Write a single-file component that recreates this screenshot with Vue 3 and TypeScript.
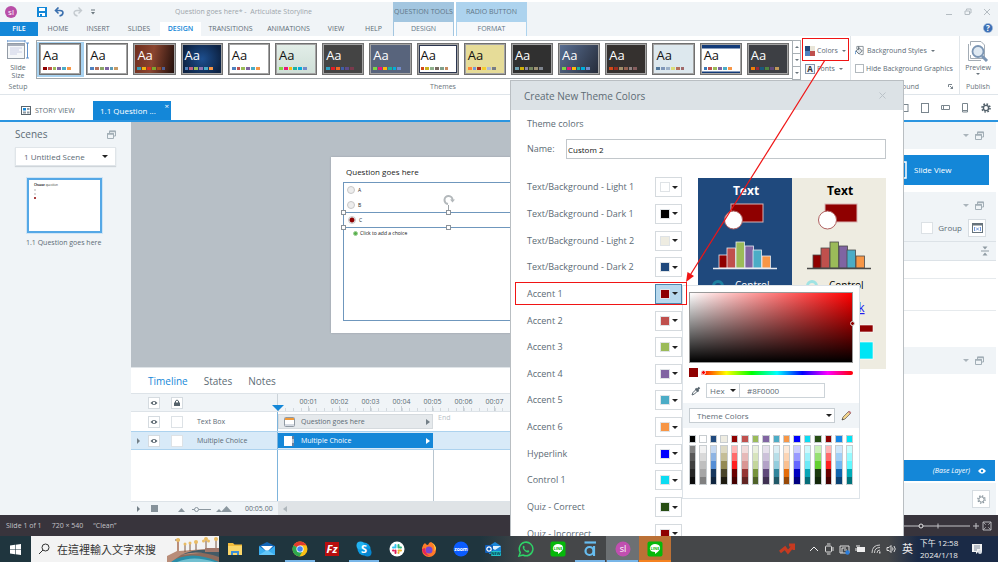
<script setup lang="ts">
import { ref } from 'vue'

interface Theme {
  name: string
  look: string
  palette: string[]
}

const ribbonTabs = [
  { label: 'FILE', kind: 'file' },
  { label: 'HOME', kind: '' },
  { label: 'INSERT', kind: '' },
  { label: 'SLIDES', kind: '' },
  { label: 'DESIGN', kind: 'active' },
  { label: 'TRANSITIONS', kind: '' },
  { label: 'ANIMATIONS', kind: '' },
  { label: 'VIEW', kind: '' },
  { label: 'HELP', kind: '' },
]

const office = ['#4f81bd', '#c0504d', '#9bbb59', '#8064a2', '#4bacc6', '#f79646']
const themes: Theme[] = [
  { name: 'custom', look: 'selected', palette: ['#8f0000', '#c0504d', '#9bbb59', '#8064a2', '#4bacc6', '#f79646'] },
  { name: 'office', look: '', palette: ['#4f81bd', '#b5705d', '#8aa568', '#8064a2', '#5b9cb6', '#c79a66'] },
  { name: 'copper', look: 'copper', palette: ['#3a9ab2', '#f0b310', '#d8321e', '#7fa62e', '#a34b1c', '#4f5f94'] },
  { name: 'navy', look: 'navy', palette: ['#4f81bd', '#c0607d', '#9bbb59', '#8f74b2', '#4bacc6', '#f79646'] },
  { name: 'clean', look: '', palette: office },
  { name: 'mint', look: 'mint', palette: ['#7ed348', '#ea157a', '#feb80a', '#1ab39f', '#00addc', '#738ac8'] },
  { name: 'charcoal', look: 'charcoal', palette: ['#2f9fc0', '#e01f26', '#f26522', '#3f5fa8', '#5b4a8a', '#7a3a4c'] },
  { name: 'slate', look: 'slate', palette: ['#7ed348', '#ea157a', '#feb80a', '#1ab39f', '#00addc', '#738ac8'] },
  { name: 'frame', look: 'framed', palette: ['#d34817', '#c9b01d', '#8fb08c', '#7a6a60', '#7f9f8b', '#c78a60'] },
  { name: 'sand', look: 'sand', palette: ['#fe8637', '#7598d9', '#b32c16', '#f5cd2d', '#aebad5', '#777c84'] },
  { name: 'board', look: 'board', palette: ['#6ea0b0', '#ccaf0a', '#8d89a4', '#748560', '#9e9273', '#7e848d'] },
  { name: 'dusk', look: 'dusk', palette: ['#7ed348', '#ea157a', '#feb80a', '#1ab39f', '#00addc', '#738ac8'] },
  { name: 'coffee', look: 'coffee', palette: ['#d34817', '#9b2d1f', '#a28e6a', '#956251', '#918485', '#855d5d'] },
  { name: 'ice', look: 'ice', palette: ['#53789b', '#8097b8', '#9cb0c8', '#d9dc7a', '#b5705d', '#a06a6a'] },
  { name: 'bands', look: 'bands', palette: ['#3b78b8', '#c0504d', '#9bbb59', '#8064a2', '#4bacc6', '#f79646'] },
  { name: 'graphite', look: 'graphite', palette: ['#f07f09', '#9f2936', '#1b587c', '#4e8542', '#604878', '#c19859'] },
]

const colorRows = [
  { label: 'Text/Background - Light 1', color: '#ffffff' },
  { label: 'Text/Background - Dark 1', color: '#000000' },
  { label: 'Text/Background - Light 2', color: '#eeece1' },
  { label: 'Text/Background - Dark 2', color: '#1f497d' },
  { label: 'Accent 1', color: '#8f0000' },
  { label: 'Accent 2', color: '#c0504d' },
  { label: 'Accent 3', color: '#9bbb59' },
  { label: 'Accent 4', color: '#8064a2' },
  { label: 'Accent 5', color: '#4bacc6' },
  { label: 'Accent 6', color: '#f79646' },
  { label: 'Hyperlink', color: '#0000ff' },
  { label: 'Control 1', color: '#0cdcf2' },
  { label: 'Quiz - Correct', color: '#274e13' },
  { label: 'Quiz - Incorrect', color: '#8f0000' },
]

const swatches = [
  ['#000000', '#808080', '#595959', '#404040', '#262626', '#0d0d0d'],
  ['#ffffff', '#f2f2f2', '#d9d9d9', '#bfbfbf', '#a6a6a6', '#808080'],
  ['#1f497d', '#c6d9f1', '#8eb4e3', '#558ed5', '#17375e', '#10253f'],
  ['#eeece1', '#ddd9c3', '#c4bd97', '#948a54', '#4a452a', '#1e1c11'],
  ['#8f0000', '#ffb5b5', '#ff6b6b', '#ff2020', '#6b0000', '#470000'],
  ['#c0504d', '#f2dcdb', '#e6b9b8', '#d99694', '#953735', '#632523'],
  ['#9bbb59', '#ebf1de', '#d7e4bd', '#c3d69b', '#77933c', '#4f6228'],
  ['#8064a2', '#e6e0ec', '#ccc1da', '#b3a2c7', '#604a7b', '#403152'],
  ['#4bacc6', '#dbeef4', '#b7dee8', '#93cddd', '#31859c', '#215968'],
  ['#f79646', '#fdeada', '#fcd5b5', '#fac090', '#e46c0a', '#984807'],
  ['#0000ff', '#ccccff', '#9999ff', '#6666ff', '#0000bf', '#000080'],
  ['#0cdcf2', '#cef8fc', '#9df1fa', '#6ceaf7', '#09a5b5', '#066e79'],
  ['#274e13', '#cbf0b8', '#97e072', '#64d030', '#1d3a0e', '#132709'],
  ['#8f0000', '#ffb5b5', '#ff6b6b', '#ff2020', '#6b0000', '#470000'],
  ['#1487e8', '#d0e7fa', '#a1cff6', '#72b7f1', '#0f65ae', '#0a4374'],
  ['#00e5f5', '#caffff', '#96fbff', '#61f9ff', '#00acb8', '#00737b'],
]

const bars = [
  { x: 21, h: 13, c: '#8f0000' },
  { x: 29, h: 20, c: '#c0504d' },
  { x: 38, h: 26, c: '#9bbb59' },
  { x: 47, h: 22, c: '#8064a2' },
  { x: 55, h: 18, c: '#4bacc6' },
  { x: 64, h: 12, c: '#f79646' },
]
const previews = [
  { id: 'dark', bg: '#1f497d', fg: '#ffffff', edge: '#e8ecf2', ring: '#1d7f9f' },
  { id: 'light', bg: '#eeece1', fg: '#000000', edge: '#4a4a4a', ring: '#9fe3e4' },
]

const seconds = Array.from({ length: 7 }, (_, i) => '00:' + String(i + 1).padStart(2, '0'))
const apps = [
  { id: 'files', state: '' }, { id: 'mail', state: '' }, { id: 'chrome', state: 'open' },
  { id: 'filezilla', state: '' }, { id: 'skype', state: 'open' }, { id: 'slack', state: '' },
  { id: 'firefox', state: '' }, { id: 'zoom', state: '' }, { id: 'outlook', state: '' },
  { id: 'whatsapp', state: '' }, { id: 'line', state: '' }, { id: 'articulate', state: 'open' },
  { id: 'storyline', state: 'open current' }, { id: 'line', state: 'alert' },
]

const answer = ref('C')
const themeName = ref('Custom 2')
const hex = ref('#8F0000')
const hideGraphics = ref(false)
const group = ref(false)
</script>

<template>
  <div class="desktop">
    <header class="top">
      <div class="top-left">
        <div class="quick">
          <svg class="badge-sl" viewBox="0 0 12 12"><circle cx="6" cy="6" r="6" fill="#b94fa8" /><text x="6" y="8.500" text-anchor="middle" font-size="8" fill="#fff">sl</text></svg>
          <button class="plain" aria-label="Save"><svg width="10" height="10" viewBox="0 0 10 10"><path d="M0 0H10V10H0Z" fill="#1287d8" /><path d="M2 1H8V4H2ZM2 6H8V9H2Z" fill="#fff" /><path d="M3 7H5V9H3Z" fill="#1287d8" /></svg></button>
          <button class="plain" aria-label="Undo"><svg width="11" height="10" viewBox="0 0 11 10"><path d="M4.500 .5L1.500 3.500L4.500 6.500M2 3.500H6C10 3.500 10 8 5.500 9" fill="none" stroke="#3a6fae" stroke-width="1.600" /></svg></button>
          <button class="plain" aria-label="Redo"><svg width="11" height="10" viewBox="0 0 11 10"><path d="M6.500 .5L9.500 3.500L6.500 6.500M9 3.500H5C1 3.500 1 8 5.500 9" fill="none" stroke="#c4cacf" stroke-width="1.400" /></svg></button>
          <button class="plain" aria-label="More"><svg width="6" height="6" viewBox="0 0 6 6"><path d="M1 1H5" stroke="#6b777f" /><path d="M1 3H5L3 5.500Z" fill="#6b777f" /></svg></button>
          <span class="title">Question goes here* -&nbsp; Articulate Storyline</span>
        </div>
        <nav class="tabs">
          <button v-for="t in ribbonTabs" :key="t.label" :class="t.kind">{{ t.label }}</button>
        </nav>
      </div>
      <div class="context question"><span>QUESTION TOOLS</span><button>DESIGN</button></div>
      <div class="context radio"><span>RADIO BUTTON</span><button>FORMAT</button></div>
      <div class="window">
        <div class="window-buttons">
          <button class="plain" aria-label="Minimize"><svg width="8" height="8" viewBox="0 0 8 8"><path d="M1 6.500H7" stroke="#b4bcc2" /></svg></button>
          <button class="plain" aria-label="Restore"><svg width="8" height="8" viewBox="0 0 8 8" fill="none" stroke="#b4bcc2"><path d="M2.500 2.500V1H7V5H5.500M1 3H5.500V6.500H1Z" /></svg></button>
          <button class="plain" aria-label="Close"><svg width="8" height="8" viewBox="0 0 8 8"><path d="M1 1L7 7M7 1L1 7" stroke="#b4bcc2" /></svg></button>
        </div>
        <button class="plain help" aria-label="Help"><svg width="10" height="10" viewBox="0 0 10 10"><circle cx="5" cy="5" r="4.600" fill="#3c6fb5" stroke="#9db9dc" stroke-width=".6" /><text x="5" y="8" text-anchor="middle" font-size="8" font-weight="700" fill="#fff">?</text></svg></button>
      </div>
    </header>

    <section class="ribbon">
      <div class="group setup">
        <button class="tall">
          <svg width="22" height="20" viewBox="0 0 22 20"><path d="M0 1H18M0 0V2.500M18 0V2.500M20.500 3V18M19 3H22M19 18H22" stroke="#5e91cd" fill="none" /><rect x=".5" y="3.500" width="17" height="15" fill="#f5f7f9" stroke="#939ca6" /><rect x="1" y="4" width="16" height="2" fill="#a6adba" /><path d="M3 8H15M3 10H12M3 12H15M3 14H10" stroke="#ccd0e6" /></svg>
          <span>Slide<br>Size</span>
        </button>
        <span class="caption">Setup</span>
      </div>
      <div class="group themes">
        <div class="themes-row">
          <div class="gallery">
            <button v-for="t in themes" :key="t.name" class="theme" :class="t.look" :aria-label="t.name">
              <span class="face"><span class="aa">Aa</span><span class="chips"><i v-for="(c, n) in t.palette" :key="n" :style="{ background: c }"></i></span></span>
            </button>
          </div>
          <div class="scroller"><button aria-label="Up"><i class="caret up"></i></button><button aria-label="Down"><i class="caret"></i></button><button aria-label="All themes"><i class="caret"></i></button></div>
          <div class="pair">
            <button class="plain tool"><svg width="10" height="10" viewBox="0 0 10 10"><path d="M0 0H5V5H0Z" fill="#23497c" /><path d="M5 0H10V5H5Z" fill="#e9e5d8" /><path d="M0 5H5V10H0Z" fill="#4d80bf" /><path d="M5 5H10V10H5Z" fill="#c0504d" /></svg>Colors<i class="caret"></i></button>
            <button class="plain tool"><svg width="10" height="10" viewBox="0 0 10 10"><rect x=".5" y=".5" width="9" height="9" fill="#f1f4f8" stroke="#8495ad" /><text x="5" y="8" text-anchor="middle" font-size="8" font-weight="700" fill="#333">A</text></svg>Fonts<i class="caret"></i></button>
          </div>
        </div>
        <span class="caption">Themes</span>
      </div>
      <div class="group background">
        <div class="pair">
          <button class="plain tool"><svg width="10" height="11" viewBox="0 0 11 11"><path d="M2 4V1H9V10H6" fill="#fff" stroke="#848d95" /><path d="M1 6L4.500 2.500L8 6L4.500 9.500Z" fill="#dfe4e8" stroke="#606a72" /><path d="M1 6Q0 8 .5 9.500" stroke="#4a86c6" fill="none" /><path d="M4 1V5" stroke="#606a72" /></svg>Background Styles<i class="caret"></i></button>
          <label class="tool"><input v-model="hideGraphics" type="checkbox">Hide Background Graphics</label>
        </div>
        <div class="caption with-launcher"><span>Background</span><button class="plain" aria-label="Background options"><svg width="5" height="5" viewBox="0 0 5 5"><path d="M.5 3V.5H4M2 2L4 4" fill="none" stroke="#7a858d" /><path d="M5 2V5H2Z" fill="#7a858d" /></svg></button></div>
      </div>
      <div class="group publish">
        <button class="tall">
          <svg width="22" height="23" viewBox="0 0 22 23"><path d="M3.500 5.500V1.500H14L17.500 5V18.500H3.500V15" fill="#fff" stroke="#a3acb5" /><path d="M1.500 4V20.500H14" fill="none" stroke="#a3acb5" /><circle cx="11" cy="11.500" r="5.500" fill="#dfe9f2" stroke="#7c96b4" stroke-width="1.800" /><path d="M15 16L20 21" stroke="#7c96b4" stroke-width="3" /></svg>
          <span>Preview</span><i class="caret"></i>
        </button>
        <span class="caption">Publish</span>
      </div>
    </section>

    <div class="doc-tabs">
      <button class="story"><svg width="10" height="9" viewBox="0 0 10 9"><rect x=".5" y=".5" width="9" height="8" fill="#fff" stroke="#59656d" /><path d="M2 2H5V4.500H2Z" fill="#1487d8" /><path d="M6 2H8.500V4H6ZM2 5.500H5V7.500H2ZM6 5.500H8.500V7.500H6Z" fill="#8d9aa4" /></svg>STORY VIEW</button>
      <button class="doc">1.1 Question ...<span class="x">×</span></button>
      <div class="devices">
        <svg width="12" height="10" viewBox="0 0 12 10"><rect x="1" y="1.500" width="10" height="7" fill="none" stroke="#7a868e" /></svg>
        <svg width="8" height="10" viewBox="0 0 8 10"><rect x=".5" y=".5" width="7" height="9" fill="none" stroke="#7a868e" /></svg>
        <svg width="9" height="5" viewBox="0 0 9 5"><path d="M.5 .5H8.500V4.500H.5ZM2.500 1V4" fill="none" stroke="#7a868e" /></svg>
        <svg width="6" height="10" viewBox="0 0 6 10"><path d="M.5 .5H5.500V9H.5ZM1 7.500H5" fill="none" stroke="#7a868e" /></svg>
        <svg width="10" height="10" viewBox="0 0 10 10"><circle cx="5" cy="5" r="4" fill="none" stroke="#52606a" stroke-width="1.600" stroke-dasharray="1.600 1.540" /><circle cx="5" cy="5" r="2.600" fill="none" stroke="#52606a" stroke-width="1.400" /></svg>
      </div>
    </div>

    <main class="work">
      <aside class="scenes">
        <h2>Scenes <svg width="9" height="9" viewBox="0 0 9 9"><path d="M2.500 3V1H8.500V6H6.500M.5 3.500H6.500V8.500H.5Z" fill="none" stroke="#a3afb7" /><path d="M2 1.500H9M0 4H7" stroke="#a3afb7" stroke-width="1.500" /></svg></h2>
        <div class="select scene"><select aria-label="Scene"><option>1 Untitled Scene</option></select><i class="caret"></i></div>
        <button class="thumb" aria-label="1.1 Question goes here">
          <span class="mini"><b>Choose</b> question</span><i></i><i></i><i class="on"></i>
        </button>
        <span class="thumb-name">1.1 Question goes here</span>
      </aside>

      <section class="center">
        <div class="canvas">
          <article class="slide">
            <h1>Question goes here</h1>
            <div class="choices">
              <label v-for="c in ['A', 'B', 'C']" :key="c" :class="{ picked: c === 'C' }">
                <input v-model="answer" type="radio" name="choice" :value="c">{{ c }}
                <template v-if="c === 'C'"><i class="handle tl"></i><i class="handle tc"></i><i class="handle bl"></i><i class="handle bc"></i>
                  <svg class="rotate" width="12" height="16" viewBox="0 0 12 16"><path d="M5.500 10V15" stroke="#9ea4a8" /><path d="M5 9A4 4 0 1 1 9.500 5" fill="none" stroke="#b3b8bb" stroke-width="2" /><path d="M7 4.500H12L9.500 7.500Z" fill="#b3b8bb" /></svg>
                </template>
              </label>
              <button class="plain add"><i></i>Click to add a choice</button>
            </div>
          </article>
        </div>
        <div class="timeline">
          <nav><button class="on">Timeline</button><button>States</button><button>Notes</button></nav>
          <div class="lane head">
            <div class="left"><span></span><svg class="eye" viewBox="0 0 12 12"><rect x=".5" y=".5" width="11" height="11" fill="#fff" stroke="#d5dbe0" /><path d="M2.500 6Q6 2 9.500 6Q6 10 2.500 6Z" fill="#55626b" /><circle cx="6" cy="6" r="1.200" fill="#fff" /></svg><svg class="eye" viewBox="0 0 12 12"><rect x=".5" y=".5" width="11" height="11" fill="#fff" stroke="#d5dbe0" /><path d="M3 5.500H9V9H3Z" fill="#55626b" /><path d="M4.500 6V4Q6 2 7.500 4V6" fill="none" stroke="#55626b" /></svg></div>
            <div class="ruler"><span v-for="s in seconds" :key="s">{{ s }}</span><svg class="playhead" width="12" height="6" viewBox="0 0 12 6"><path d="M0 0H12L6 6Z" fill="#1487d8" /></svg></div>
          </div>
          <div class="lane">
            <div class="left"><span></span><svg class="eye" viewBox="0 0 12 12"><rect x=".5" y=".5" width="11" height="11" fill="#fff" stroke="#d5dbe0" /><path d="M2.500 6Q6 2 9.500 6Q6 10 2.500 6Z" fill="#55626b" /><circle cx="6" cy="6" r="1.200" fill="#fff" /></svg><i class="box"></i>Text Box</div>
            <div class="track"><button class="clip"><svg width="11" height="10" viewBox="0 0 11 10"><rect x=".5" y=".5" width="10" height="9" rx="1" fill="#fff" stroke="#9099a2" /><path d="M1 2H10" stroke="#ef9a3a" stroke-width="2" /><path d="M1 7H10V9H1Z" fill="#d5dae2" /></svg>Question goes here<i class="play"></i></button><span class="end">End</span></div>
          </div>
          <div class="lane chosen">
            <div class="left"><i class="play"></i><svg class="eye" viewBox="0 0 12 12"><rect x=".5" y=".5" width="11" height="11" fill="#fff" stroke="#d5dbe0" /><path d="M2.500 6Q6 2 9.500 6Q6 10 2.500 6Z" fill="#55626b" /><circle cx="6" cy="6" r="1.200" fill="#fff" /></svg><i class="box"></i>Multiple Choice</div>
            <div class="track"><button class="clip"><svg width="11" height="10" viewBox="0 0 11 10"><rect width="8" height="10" fill="#fff" /><path d="M8 0H10V10H8Z" fill="#6a7f9c" /><path d="M9 3V7" stroke="#fff" /></svg>Multiple Choice<i class="play"></i></button></div>
          </div>
          <div class="lane empty"><div class="left"></div><div class="track"><span class="span"></span></div></div>
          <div class="lane foot">
            <div class="left"><i class="play"></i><i class="stop"></i>
              <svg width="54" height="8" viewBox="0 0 54 8"><path d="M0 7L3.500 3L7 7Z" fill="#8b979f" /><path d="M14 4.500H33" stroke="#8b979f" /><circle cx="18.500" cy="4.500" r="2" fill="#f0f4f7" stroke="#8b979f" /><path d="M38 7L41 4L44 7ZM43 7L48.500 1L54 7Z" fill="#8b979f" /></svg>
              <span>00:05.00</span></div>
            <div class="bar"><i class="play back"></i></div>
          </div>
        </div>
      </section>

      <aside class="panels">
        <div class="p-head"><i class="caret"></i><svg width="9" height="9" viewBox="0 0 9 9"><path d="M2.500 3V1H8.500V6H6.500M.5 3.500H6.500V8.500H.5Z" fill="none" stroke="#a3afb7" /><path d="M2 1.500H9M0 4H7" stroke="#a3afb7" stroke-width="1.500" /></svg></div>
        <div class="p-view"><button><svg width="12" height="18" viewBox="0 0 12 18"><path d="M0 1H11V17H0" fill="none" stroke="#fff" stroke-width="1.500" /><path d="M0 4H8V14H0" fill="none" stroke="#9ccbf0" /></svg>Slide View</button></div>
        <div class="p-head"><i class="caret"></i><svg width="9" height="9" viewBox="0 0 9 9"><path d="M2.500 3V1H8.500V6H6.500M.5 3.500H6.500V8.500H.5Z" fill="none" stroke="#a3afb7" /><path d="M2 1.500H9M0 4H7" stroke="#a3afb7" stroke-width="1.500" /></svg></div>
        <div class="p-group"><label><input v-model="group" type="checkbox">Group</label><button class="square" aria-label="Variables"><svg width="11" height="10" viewBox="0 0 11 10"><rect x=".5" y=".5" width="10" height="9" fill="#fff" stroke="#66737c" /><path d="M1 1.500H10" stroke="#66737c" stroke-width="2" /><path d="M2.500 4V8M8.500 4V8M4 4.500L7 7.500M7 4.500L4 7.500" stroke="#4f7fd0" stroke-width=".8" /></svg></button></div>
        <div class="p-sort"><svg width="8" height="10" viewBox="0 0 8 10"><path d="M0 5H8" stroke="#8f9ba3" /><path d="M1.500 .5H6.500L4 3.500ZM1.500 9.500H6.500L4 6.500Z" fill="#8f9ba3" /></svg></div>
        <div class="p-line"></div><div class="p-line tall-line"></div><div class="p-space"></div>
        <div class="p-head"><i class="caret"></i><svg width="9" height="9" viewBox="0 0 9 9"><path d="M2.500 3V1H8.500V6H6.500M.5 3.500H6.500V8.500H.5Z" fill="none" stroke="#a3afb7" /><path d="M2 1.500H9M0 4H7" stroke="#a3afb7" stroke-width="1.500" /></svg></div>
        <div class="p-layers"></div>
        <button class="p-base"><em>(Base Layer)</em><svg width="8" height="6" viewBox="0 0 8 6"><path d="M0 3Q4 -2.500 8 3Q4 8.500 0 3Z" fill="#fff" /><circle cx="4" cy="3" r="1.200" fill="#1487d8" /></svg></button>
        <div class="p-foot"><button class="square" aria-label="Layer settings"><svg width="9" height="9" viewBox="0 0 9 9"><circle cx="4.500" cy="4.500" r="3.600" fill="none" stroke="#8a969e" stroke-width="1.400" stroke-dasharray="1.400 1.430" /><circle cx="4.500" cy="4.500" r="2.600" fill="none" stroke="#8a969e" /></svg></button></div>
      </aside>
    </main>

    <footer class="status">
      <span>Slide 1 of 1</span><span>720 × 540</span><span>“Clean”</span>
      <svg width="94" height="12" viewBox="0 0 94 12"><path d="M0 6H66M34 3.500V8.500M69 6H75M72 3V9" stroke="#c2c2c6" /><circle cx="17" cy="6" r="2" fill="#38343c" stroke="#e4e4e6" /><path d="M79 2H87V10H79Z" fill="none" stroke="#b5b5ba" /><path d="M79 2L87 10M87 2L79 10" stroke="#b5b5ba" stroke-width=".8" /><path d="M81.500 6H84.500" stroke="#38343c" stroke-width="3" /></svg>
    </footer>

    <section class="dialog" role="dialog" aria-labelledby="dialog-title">
      <header><h2 id="dialog-title">Create New Theme Colors</h2><button class="plain" aria-label="Close dialog"><svg width="7" height="7" viewBox="0 0 7 7"><path d="M.5 .5L6.500 6.500M6.500 .5L.5 6.500" stroke="#bac2c8" /></svg></button></header>
      <div class="body">
        <h3>Theme colors</h3>
        <div class="name"><label for="theme-name">Name:</label><input id="theme-name" v-model="themeName" type="text"></div>
        <div class="columns">
          <ul>
            <li v-for="r in colorRows" :key="r.label">{{ r.label }}<button :class="{ open: r.label === 'Accent 1' }" :aria-label="r.label"><i class="chip" :style="{ background: r.color }"></i><i class="caret"></i></button></li>
          </ul>
          <div class="previews">
            <svg v-for="p in previews" :key="p.id" viewBox="0 0 94 191" :class="p.id">
              <rect width="94" height="191" :fill="p.bg" />
              <text x="48" y="17" text-anchor="middle" font-size="12" font-weight="700" :fill="p.fg">Text</text>
              <rect x="33" y="26" width="32" height="18" fill="#8f0000" stroke="#d9b3b3" />
              <circle cx="35.500" cy="42" r="9" fill="#fff" stroke="#b06060" />
              <rect v-for="b in bars" :key="b.x" :x="b.x" :y="90 - b.h" width="8.500" :height="b.h" :fill="b.c" :stroke="p.edge" stroke-width=".8" />
              <path d="M15 90.500H79" :stroke="p.edge" stroke-width="1.500" />
              <circle cx="20" cy="108" r="4.500" :fill="p.bg" :stroke="p.ring" stroke-width="3" />
              <text x="37" y="111" font-size="10" :fill="p.fg">Control</text>
              <text x="19" y="134" font-size="12" fill="#2020f0" text-decoration="underline">Hyperlink</text>
              <rect x="20" y="147" width="61" height="7" fill="#8f0000" stroke="#fff" stroke-width=".6" />
              <rect x="20" y="164" width="61" height="17" fill="#00e5f5" stroke="#fff" stroke-width=".6" />
            </svg>
          </div>
        </div>
      </div>
      <div class="picker">
        <div class="field"><i></i></div>
        <div class="hue"><i class="now"></i><span><i></i></span></div>
        <div class="hex">
          <button class="plain" aria-label="Pick from screen"><svg width="10" height="10" viewBox="0 0 10 10"><path d="M1 9L2 6.500L5.500 3L7 4.500L3.500 8Z" fill="#fff" stroke="#5a6770" /><path d="M4.500 2.500L7.500 5.500M6 4L8.500 1.500" stroke="#5a6770" stroke-width="2" /></svg></button>
          <div class="select mode"><select aria-label="Color format"><option>Hex</option></select><i class="caret"></i></div>
          <input v-model="hex" type="text" aria-label="Color value">
        </div>
        <div class="set">
          <div class="select"><select aria-label="Color set"><option>Theme Colors</option></select><i class="caret"></i></div>
          <button class="plain" aria-label="Edit colors"><svg width="11" height="11" viewBox="0 0 11 11"><path d="M1 10L2 7L8 1L10 3L4 9Z" fill="#f2d48c" stroke="#8a8172" /><path d="M7 2L8.500 .8L10.300 2.500L9 4Z" fill="#c68088" /><path d="M1 10L1.600 8.200L2.800 9.400Z" fill="#444" /></svg></button>
        </div>
        <div class="palette">
          <div v-for="(col, n) in swatches" :key="n"><button v-for="(c, m) in col" :key="m" :style="{ background: c }" :aria-label="c"></button></div>
        </div>
      </div>
    </section>

    <div class="mark mark-colors"></div>
    <div class="mark mark-accent"></div>
    <svg class="arrow" width="144" height="226" viewBox="0 0 144 226"><path d="M141 0L5 217" stroke="#f01414" stroke-width="1.200" /><path d="M2 222L3.500 212L10 216Z" fill="#f01414" /></svg>

    <footer class="taskbar">
      <button class="start" aria-label="Start"><svg width="11" height="11" viewBox="0 0 11 11"><path d="M0 1.500L5 .8V5.200H0ZM5.600 .7L11 0V5.200H5.600ZM0 5.800H5V10.200L0 9.500ZM5.600 5.800H11V11L5.600 10.300Z" fill="#fff" /></svg></button>
      <label class="search">
        <svg width="12" height="12" viewBox="0 0 12 12"><circle cx="7.500" cy="4.500" r="3.500" fill="none" stroke="#333" /><path d="M5 7L1 11" stroke="#333" /></svg>
        <input type="text" aria-label="搜尋" placeholder="在這裡輸入文字來搜">
        <svg width="52" height="26" viewBox="0 0 52 26"><path d="M0 26V22L8 17L20 15L34 14L52 16V26Z" fill="#8c6a5c" /><path d="M3 26Q24 13 52 26Z" fill="#2b8ea8" /><path d="M10 26Q26 19 48 26Z" fill="#71bfd0" /><path d="M0 20L10 15V4H12V15L52 12V15L14 19L4 26H0Z" fill="#b98d79" /><path d="M14 19Q30 13 52 21V15Q30 11 14 19Z" fill="#435a66" /><path d="M18 8V16M23 7V15M29 6V14M39 3V14M49 3V14M8 4H13" stroke="#7c5845" /><g fill="#e9bb63"><circle cx="11" cy="4" r="2" /><circle cx="18" cy="8" r="1.500" /><circle cx="23" cy="7" r="1.500" /><circle cx="29" cy="6" r="2" /><circle cx="39" cy="3" r="2" /><circle cx="36.500" cy="5" r="1.500" /><circle cx="41.500" cy="5" r="1.500" /><circle cx="49" cy="3" r="2" /></g><path d="M38 16H52V12H38Z" fill="#a2786b" /></svg>
      </label>
      <div class="apps">
        <button v-for="(a, n) in apps" :key="n" :class="a.state" :aria-label="a.id">
          <svg width="16" height="16" viewBox="0 0 16 16">
            <g v-if="a.id === 'files'"><path d="M1 2H6L7.500 3.500H15V14H1Z" fill="#f3bd3c" /><path d="M1 5H15V14H1Z" fill="#fbd769" /><path d="M4 14V10H12V14H10V12H6V14Z" fill="#3f8fd8" /></g>
            <g v-else-if="a.id === 'mail'"><path d="M0 5L8 1L16 5V14H0Z" fill="#1266b8" /><path d="M2 5H14L8 11Z" fill="#fff" /><path d="M0 5L8 11L16 5V14H0Z" fill="#3aaef0" /><path d="M0 14L8 9L16 14Z" fill="#64c7f8" /></g>
            <g v-else-if="a.id === 'chrome'"><circle cx="8" cy="8" r="7.500" fill="#fbc116" /><path d="M8 8L1.500 4.200A7.500 7.500 0 0 1 14.500 4.300H8Z" fill="#e33b2e" /><path d="M8 8L1.500 4.200A7.500 7.500 0 0 0 7.500 15.500L11 9.500Z" fill="#2da94f" /><circle cx="8" cy="8" r="3.600" fill="#fff" /><circle cx="8" cy="8" r="2.800" fill="#4285f4" /></g>
            <g v-else-if="a.id === 'filezilla'"><rect x="1" y="1" width="14" height="14" fill="#b80e0e" /><text x="8" y="12" text-anchor="middle" font-size="11" font-weight="700" font-style="italic" fill="#fff">Fz</text></g>
            <g v-else-if="a.id === 'skype'"><circle cx="8" cy="8" r="6.500" fill="#0b9be3" /><circle cx="4.500" cy="4.500" r="4" fill="#22b2f0" /><circle cx="11.500" cy="11.500" r="4" fill="#0786cf" /><text x="8" y="12" text-anchor="middle" font-size="11" font-weight="700" fill="#fff">S</text></g>
            <g v-else-if="a.id === 'slack'"><circle cx="8" cy="8" r="7.500" fill="#fff" /><g stroke-width="2" stroke-linecap="round"><path d="M6.500 4V6.500M4 6.500H5" stroke="#36c5f0" /><path d="M9.500 4V6.500M11 6.500H12" stroke="#2eb67d" /><path d="M9.500 9.500H12M9.500 11.500V12" stroke="#ecb22e" /><path d="M6.500 9.500V12M4 9.500H4.500" stroke="#e01e5a" /></g></g>
            <g v-else-if="a.id === 'firefox'"><path d="M1 7Q2 3 4 2Q5 4 7 4Q8 1 10 1Q15 4 15 9A7 7 0 0 1 1 9Z" fill="#ff7a29" /><path d="M10 1Q15 5 13 10Q15 9 15 7Q14 3 10 1Z" fill="#ffd23f" /><circle cx="8" cy="9" r="3.500" fill="#7a45d0" /><path d="M1 8Q2 15 9 15Q4 13 4 7Z" fill="#e8235b" /></g>
            <g v-else-if="a.id === 'zoom'"><circle cx="8" cy="8" r="7.500" fill="#0b5cff" /><text x="8" y="9.500" text-anchor="middle" font-size="5" font-weight="700" fill="#fff">zoom</text></g>
            <g v-else-if="a.id === 'outlook'"><path d="M4 5L10 1L16 5V13H4Z" fill="#1b86d8" /><path d="M4 5H16L10 9Z" fill="#dff1ff" /><rect y="4" width="8" height="8" rx="1" fill="#0f5eb8" /><circle cx="4" cy="8" r="2.200" fill="none" stroke="#fff" stroke-width="1.200" /><rect x="6" y="10" width="10" height="5" rx="1" fill="#22c3c8" /><text x="11" y="14" text-anchor="middle" font-size="4" font-weight="700" fill="#053e50">NEW</text></g>
            <g v-else-if="a.id === 'whatsapp'"><path d="M1 15L2.300 11.500A6.800 6.800 0 1 1 5 14Z" fill="none" stroke="#2ed167" stroke-width="1.500" /><path d="M5 5Q6 4 6.700 6L6.200 7.200Q7 9 9 9.800L10 9Q12 10 11 11Q9 12.500 6.500 9.800Q4 7 5 5Z" fill="#2ed167" /></g>
            <g v-else-if="a.id === 'line'"><rect x=".5" y=".5" width="15" height="15" rx="2" fill="#06b80a" /><path d="M8 3C13 3 14 7 12.500 9Q11 11 8 13V11C3 11 2.500 8 3 6.500Q4 3 8 3Z" fill="#fff" /><text x="8" y="8.500" text-anchor="middle" font-size="4" font-weight="700" fill="#06b80a">LINE</text></g>
            <g v-else-if="a.id === 'articulate'" fill="none" stroke="#67bdf0" stroke-width="2.200"><path d="M2.500 1.500H14" /><circle cx="7.500" cy="10" r="4" /><path d="M12 5V15" /></g>
            <g v-else><circle cx="8" cy="8" r="7.500" fill="#c14fb0" /><text x="8" y="11" text-anchor="middle" font-size="9" fill="#fff">sl</text></g>
          </svg>
        </button>
      </div>
      <div class="tray">
        <svg class="stock" width="16" height="12" viewBox="0 0 16 12"><path d="M1 9L6 5L9 9L14 3M10 2H15V7" fill="none" stroke="#c63a20" stroke-width="3" /></svg>
        <svg width="10" height="10" viewBox="0 0 10 10"><path d="M1 7L5 3L9 7" fill="none" stroke="#eee" /></svg>
        <svg width="10" height="12" viewBox="0 0 10 12"><rect x="1.500" y="3" width="6" height="6" rx="1" fill="none" stroke="#ddd" /><path d="M3 1H6.500M3 11H6.500M9 4V8" stroke="#ddd" /></svg>
        <svg width="11" height="11" viewBox="0 0 11 11"><path d="M1 2H10V9H1ZM3 9V4H7M5 6H8" fill="none" stroke="#ddd" /><circle cx="8.500" cy="8.500" r="2.200" fill="#2e7fdc" /></svg>
        <svg width="11" height="10" viewBox="0 0 11 10"><path d="M2 3H10V8H2Z" fill="#eee" /><path d="M1 4V7M2 1V3M4 1V3" stroke="#eee" /></svg>
        <svg width="10" height="10" viewBox="0 0 10 10" fill="none" stroke="#ccc"><path d="M1 9Q1 1 9 1M3.500 9Q3.500 3.500 9 3.500M6 9Q6 6 9 6" /><path d="M8 8.500H9.500" stroke-width="2" /></svg>
        <svg width="11" height="10" viewBox="0 0 11 10" fill="none" stroke="#ddd"><path d="M1 3.500H3L5 1.500V8.500L3 6.500H1ZM6.500 3.500Q7.500 5 6.500 6.500M8 2Q10.500 5 8 8" /></svg>
        <span class="ime">英</span>
        <time>下午 12:58<br>2024/1/18</time>
        <svg class="note" width="12" height="12" viewBox="0 0 12 12"><path d="M1 1H11V9H7L5 11V9H1Z" fill="#f2f2f2" /><path d="M3 3H9M3 5H9M3 7H6" stroke="#64748b" stroke-width=".8" /><circle cx="9" cy="9" r="2" fill="#d8dde4" /></svg>
      </div>
    </footer>
  </div>
</template>

<style>
body { margin: 0; overflow: hidden; }
</style>

<style scoped>
.desktop { position: relative; display: flex; flex-direction: column; height: 100vh; overflow: hidden; background: #fff; color: #5c6b75; font: 7px/8px "Open Sans", "Noto Sans", "Noto Sans CJK TC", sans-serif; }
.desktop *, .desktop *::before, .desktop *::after { box-sizing: border-box; }
button, input, select { margin: 0; padding: 0; border: 0; border-radius: 0; background: none; color: inherit; font: inherit; }
svg { display: block; flex: none; }
h1, h2, h3, ul { margin: 0; padding: 0; font-weight: 400; list-style: none; }
i { font-style: normal; }
.plain { display: flex; align-items: center; }
.caret { flex: none; width: 0; height: 0; border: 2px solid transparent; border-top: 2px solid #6a757d; border-bottom: 0; }
.caret.up { border-top: 0; border-bottom: 2px solid #6a757d; }
.select { display: grid; align-items: center; background: #fff; }
.select select { grid-area: 1 / 1; appearance: none; width: 100%; height: 100%; }
.select .caret { grid-area: 1 / 1; justify-self: end; pointer-events: none; border-width: 3px 3px 0; border-top-color: #222; }
.play { width: 0; height: 0; border: 3px solid transparent; border-left: 4px solid #737f87; border-right: 0; }
.play.back { border-left: 0; border-right: 4px solid #aeb6bb; }

.top { display: flex; height: 36px; flex: none; padding-top: 2px; background: #fff; }
.top-left { width: 393px; background: #f0f4f7; }
.quick { display: flex; align-items: center; height: 20px; padding-left: 5px; }
.badge-sl { width: 12px; height: 12px; margin-right: 20px; }
.quick .plain { margin-right: 7px; }
.title { margin-left: 72px; color: #9da5ab; white-space: nowrap; }
.tabs { display: grid; grid-template-columns: 38px 40px 40px 42px 41px 59px 57px 38px 37px; height: 14px; }
.tabs .file { background: #1487d8; color: #fff; font-weight: 600; }
.tabs .active { background: #fff; color: #1487d8; font-weight: 600; }
.context { display: flex; flex-direction: column; margin-right: 2px; color: #5f7687; text-align: center; }
.context span { height: 20px; line-height: 20px; white-space: nowrap; }
.context button { flex: 1; margin: 0 1px; background: #f6f8fa; }
.question { width: 61px; background: #a3c6e0; }
.radio { width: 71px; background: #add3ee; }
.window { display: flex; flex: 1; flex-direction: column; align-items: flex-end; gap: 7px; margin-left: -2px; padding: 6px 7px 0 0; background: #f0f4f7; }
.window-buttons { display: flex; gap: 11px; }
.help { margin-right: -2px; }

.ribbon { display: flex; flex: none; height: 59px; border-bottom: 1px solid #dfe5ea; background: #fff; }
.group { display: flex; flex-direction: column; align-items: center; justify-content: space-between; padding: 4px 0 3px; border-right: 1px solid #e1e6ea; }
.setup { width: 36px; border-right: 0; }
.tall { display: flex; flex-direction: column; align-items: center; gap: 4px; }
.publish .tall { gap: 1px; }
.caption { color: #6a757c; line-height: 9px; }
.with-launcher { display: flex; align-items: center; justify-content: flex-end; gap: 29px; width: 100%; padding-right: 6px; }
.themes { flex: 1; align-items: stretch; text-align: center; }
.themes-row { display: flex; }
.gallery { display: flex; flex: none; width: 757px; height: 39px; padding: 1px 0; border: 1px solid #a0a6aa; }
.theme { flex: 1; padding: 1px 3px 2px 2px; }
.theme.selected { background: #a8d2f0; }
.face { display: flex; flex-direction: column; justify-content: space-between; height: 32px; padding: 2px 3px 4px; border: 1px solid #707070; outline: 1px solid #a4a4a4; outline-offset: -2px; background: #fff; color: #111; text-align: left; }
.aa { font-size: 13px; line-height: 18px; }
.chips { display: flex; gap: 1px; width: 28px; }
.chips i { flex: 1; height: 3px; }
.copper .face { background: linear-gradient(100deg, #6e2c1c, #8a4530 45%, #1d0d0a); color: #fff; }
.navy .face { background: radial-gradient(circle, #1d4f8f, #0d2344 80%); color: #fff; }
.mint .face { background: linear-gradient(#e2eee8, #cfdfd7); }
.charcoal .face { background: #444; color: #fff; }
.slate .face { background: #58647c; color: #fff; }
.framed .face { box-shadow: inset 0 0 0 2px #2b3650; }
.sand .face { background: #e6dc98; }
.board .face { background: #303030; color: #fff; }
.dusk .face { background: linear-gradient(120deg, #5a7094, #252b38); color: #fff; }
.coffee .face { background: #35312f; color: #fff; }
.ice .face { background: #dde8ee; }
.bands .face { background: linear-gradient(#123a78 4px, #fff 5px 27px, #123a78 28px); }
.graphite .face { background: #3d3f44; color: #fff; }
.scroller { display: grid; width: 9px; height: 39px; margin-left: -1px; }
.scroller button { display: grid; place-items: center; border: 1px solid #a9b0b5; margin-bottom: -1px; }
.pair { display: flex; flex-direction: column; gap: 7px; padding: 5px 0 0 4px; }
.tool { display: flex; align-items: center; gap: 2px; height: 11px; white-space: nowrap; }
.tool .caret { margin-left: 2px; }
.background { width: 109px; }
.background .pair { align-self: flex-start; }
input[type="checkbox"] { appearance: none; width: 9px; height: 9px; border: 1px solid #b2b9be; background: #fff; }
.publish { width: 36px; border-right: 0; margin-right: 2px; }

.doc-tabs { display: flex; flex: none; height: 27px; align-items: flex-end; border-bottom: 2px solid #2b95e0; background: #fff; }
.story { display: flex; align-items: center; gap: 4px; width: 93px; height: 19px; padding-left: 21px; }
.doc { display: flex; justify-content: space-between; width: 78px; height: 19px; padding: 0 2px 0 7px; background: #1487d8; color: #fff; font-size: 8px; line-height: 20px; }
.x { line-height: 9px; }
.devices { display: flex; flex: 1; align-items: center; justify-content: flex-end; gap: 12px; height: 100%; padding-right: 7px; }
.devices svg:last-child { margin-left: 1px; }

.work { display: flex; flex: 1; min-height: 0; }
.scenes { width: 131px; padding: 6px 15px; background: #f0f4f7; }
.scenes h2 { display: flex; align-items: center; justify-content: space-between; font-size: 10px; line-height: 13px; }
.scene { height: 19px; margin: 6px 0 12px; padding: 0 7px 0 8px; border: 1px solid #e0e5e9; box-shadow: 0 1px 1px #cfd5da; font-size: 8px; }
.thumb { display: flex; flex-direction: column; align-items: flex-start; justify-content: flex-start; gap: 2px; width: 75px; height: 55px; margin-left: 12px; padding: 3px 5px; border: 2px solid #55a8e6; outline: 1px solid #cfe5f6; background: #fff; }
.mini { font-size: 3px; line-height: 4px; color: #333; }
.thumb i { width: 2px; height: 2px; border-radius: 50%; background: #ccc; }
.thumb i.on { background: #8f0000; }
.thumb-name { display: block; margin: 6px 0 0 11px; white-space: nowrap; }

.center { display: flex; flex: 1; flex-direction: column; min-width: 0; }
.canvas { display: grid; flex: 1; place-items: center; background: #b7bfc6; }
.slide { width: 233px; height: 176px; padding: 9px 12px 11px; background: #fff; box-shadow: 0 0 2px #98a0a7; color: #222; }
.slide h1 { height: 16px; padding-left: 3px; font-size: 8px; line-height: 12px; }
.choices { height: 139px; border: 1px solid #6f97bd; font-size: 5px; }
.choices label { position: relative; display: flex; align-items: center; gap: 3px; height: 15px; padding-left: 3px; }
.choices .picked { height: 16px; margin: -1px -1px 0; padding-left: 4px; border: 1px solid #6f97bd; }
.choices input { appearance: none; width: 8px; height: 8px; border: 1px solid #c8c8c8; border-radius: 50%; background: #ededed; }
.choices input:checked { background: radial-gradient(circle, #8f0000 2px, #eee 3px); }
.handle { position: absolute; width: 5px; height: 5px; border: 1px solid #8b9299; background: #fff; }
.tl, .tc { top: -3px; }
.bl, .bc { bottom: -3px; }
.tl, .bl { left: -3px; }
.tc, .bc { left: calc(50% - 2px); }
.rotate { position: absolute; left: calc(50% - 5px); top: -18px; }
.choices .add { gap: 2px; height: 11px; padding-left: 9px; color: #111; }
.add i { width: 5px; height: 5px; border: 1px solid #9ed096; border-radius: 50%; background: #58b04c; }

.timeline { flex: none; border-top: 1px solid #dfe4e8; background: #fff; }
.timeline nav { display: flex; gap: 16px; height: 25px; padding-left: 17px; font-size: 10px; }
.timeline nav .on { color: #1487d8; }
.lane { display: flex; height: 19px; }
.lane .left { display: flex; flex: none; align-items: center; width: 147px; border-right: 1px solid #7db4dc; }
.lane .left > :first-child { width: 4px; margin: 0 7px 0 6px; }
.lane .left > .play { border-left-width: 3px; }
.eye { width: 12px; height: 12px; margin-right: 11px; }
.box { width: 12px; height: 12px; margin-right: 14px; border: 1px solid #dde2e6; background: #fff; }
.head { background: #f0f4f7; border-top: 1px solid #dde3e8; border-bottom: 1px solid #dde3e8; }
.head .left { border-color: #cbd3d9; }
.ruler { position: relative; display: flex; flex: 1; min-width: 0; clip-path: inset(0 0 0 -8px); background: repeating-linear-gradient(90deg, #c7ced4 0 1px, transparent 1px 31px) 30px 100% / 31px 5px repeat-x, repeating-linear-gradient(90deg, #d3d9de 0 1px, transparent 1px 8px) 7px 100% / 31px 3px repeat-x; }
.ruler span { flex: none; width: 31px; line-height: 15px; text-align: center; }
.ruler span:first-child { margin-left: 15px; }
.playhead { position: absolute; left: -6px; bottom: 0; }
.track { display: flex; flex: 1; align-items: center; }
.clip { display: flex; align-items: center; gap: 6px; width: 155px; height: 15px; padding: 0 2px 0 5px; border: 1px solid #d5dade; background: #e5e9ec; }
.clip .play { margin-left: auto; }
.end { align-self: flex-start; margin-left: 5px; color: #b9c2c8; line-height: 12px; }
.chosen { border-top: 1px solid #acd2ee; border-bottom: 1px solid #acd2ee; background: #d8eaf8; }
.chosen .clip { border-color: #1487d8; background: #1487d8; color: #fff; }
.chosen .clip .play { border-left-color: #fff; }
.empty { height: 51px; }
.span { width: 156px; height: 100%; border-right: 1px solid #b9c6d0; }
.foot { height: 14px; border-top: 1px solid #dde3e8; background: #f0f4f7; }
.foot .left { border-right: 0; }
.stop { width: 7px; height: 7px; margin: 0 20px 0 3px; background: #86929a; }
.foot .left > span { margin-left: 13px; }
.bar { display: flex; flex: 1; align-items: center; padding-left: 5px; background: #dfe3e6; }

.panels { display: flex; flex-direction: column; width: 234px; padding-right: 2px; }
.p-head { display: flex; flex: none; align-items: center; justify-content: flex-end; gap: 6px; height: 27px; padding-right: 12px; background: #f0f4f7; }
.p-head .caret { border-width: 3px 3px 0; border-top-color: #aab4bb; }
.p-view { flex: none; height: 43px; padding: 6px 7px; }
.p-view button { display: flex; align-items: center; gap: 7px; width: 100%; height: 30px; padding-left: 124px; background: #1487d8; color: #fff; font-size: 8px; }
.p-group { display: flex; flex: none; justify-content: flex-end; gap: 6px; height: 23px; padding-right: 10px; border-bottom: 1px solid #dce2e7; background: #f0f4f7; }
.p-group label { display: flex; align-items: center; gap: 5px; height: 18px; font-size: 8px; }
.p-group input { width: 12px; height: 12px; border-color: #dce1e5; }
.square { display: grid; place-items: center; width: 18px; height: 18px; border: 1px solid #d6dce1; background: #fff; }
.p-sort { display: grid; flex: none; place-items: center end; height: 19px; padding-right: 7px; border-bottom: 1px solid #dce2e7; background: #f0f4f7; }
.p-line { flex: none; height: 18px; border-bottom: 1px solid #e6eaed; }
.tall-line { height: 32px; }
.p-space { height: 36px; flex: none; }
.p-layers { flex: 1; }
.p-base { display: flex; flex: none; align-items: center; justify-content: flex-end; gap: 8px; height: 21px; margin: 0 1px 2px 0; padding-right: 9px; background: #1487d8; color: #fff; }
.p-foot { display: grid; flex: none; place-items: center end; height: 32px; padding-right: 6px; background: #f0f4f7; }

.status { display: flex; flex: none; align-items: center; gap: 10px; height: 21px; padding-left: 6px; background: #38343c; color: #c3c2c8; }
.status svg { margin-left: auto; }

.dialog { position: absolute; left: 510px; top: 80px; width: 394px; height: 456px; overflow: hidden; border: 1px solid #b9bec2; border-bottom: 0; background: #fff; }
.dialog header { display: flex; align-items: center; justify-content: space-between; height: 29px; padding: 0 17px 0 13px; background: #dce2e6; }
.dialog h2 { font-size: 10px; line-height: 14px; }
.body { padding: 9px 17px 0 16px; font-size: 9px; line-height: 10px; }
.dialog h3 { font-size: 9px; font-weight: 500; line-height: 10px; }
.name { display: flex; align-items: center; margin-top: 10px; }
.name label { width: 39px; }
.name input { flex: 1; height: 20px; padding: 0 1px; border: 1px solid #c2c7cb; color: #111; font-size: 8px; }
.columns { display: flex; justify-content: space-between; padding-top: 15px; }
.columns ul { display: grid; grid-template-rows: repeat(14, 1fr); width: 155px; height: 373px; }
.columns li { display: flex; align-items: center; justify-content: space-between; white-space: nowrap; }
.columns button { display: flex; align-items: center; justify-content: space-between; width: 27px; height: 20px; padding: 0 3px 0 4px; border: 1px solid #d5dade; }
.columns button.open { border-color: #4d86ac; background: #b8d9ee; }
.chip { width: 10px; height: 10px; border: 1px solid #dfe3e6; }
.columns .caret { border-width: 3px 3px 0; border-top-color: #222; }
.previews { display: grid; grid-template-columns: 1fr 1fr; width: 188px; padding-top: 4px; }
.previews svg { width: 94px; height: 191px; }

.picker { position: absolute; left: 171px; top: 204px; display: flex; flex-direction: column; width: 178px; height: 214px; border: 1px solid #dde3e8; background: #fff; }
.field { position: relative; flex: none; height: 71px; margin: 6px 6px 0; border: 1px solid #999; background: linear-gradient(transparent, #000), linear-gradient(90deg, #fff, #f00); }
.field i { position: absolute; right: -3px; top: 28px; width: 5px; height: 5px; border: 1px solid #ddd; border-radius: 50%; background: #8f0000; }
.hue { display: flex; align-items: center; gap: 3px; height: 9px; margin: 5px 6px 0; }
.now { width: 9px; height: 9px; background: #8f0000; }
.hue span { display: flex; align-items: center; flex: 1; height: 4px; border-radius: 2px; background: linear-gradient(90deg, #f00, #ff0, #0f0, #0ff, #00f, #f0f, #f00); }
.hue span i { width: 5px; height: 5px; border: 1px solid #eee; border-radius: 50%; background: #f00; }
.hex { display: flex; align-items: center; height: 15px; margin: 6px 0 5px 8px; font-size: 8px; }
.mode { width: 34px; height: 15px; margin-left: 5px; padding: 0 3px; border: 1px solid #ccd3d8; }
.hex input { width: 86px; height: 15px; margin-left: -1px; padding: 0 7px; border: 1px solid #ccd3d8; }
.set { display: flex; align-items: center; gap: 6px; height: 25px; padding: 0 7px 0 6px; background: #f0f4f7; font-size: 8px; }
.set .select { width: 146px; height: 15px; padding: 0 2px 0 7px; border: 1px solid #c6cdd2; }
.palette { display: grid; grid-template-columns: repeat(16, 1fr); gap: 3px; margin: 7px 6px 0; }
.palette div { display: grid; grid-template-rows: 10px repeat(5, 8px); }
.palette button { border: 1px solid #c8cdd0; border-width: 0 1px; }
.palette button:first-child { height: 8px; border-width: 1px; }
.palette button:nth-child(2) { border-top-width: 1px; }
.palette button:last-child { border-bottom-width: 1px; }

.mark { position: absolute; border: 1px solid #f01414; pointer-events: none; }
.mark-colors { left: 802px; top: 38px; width: 47px; height: 23px; }
.mark-accent { left: 515px; top: 282px; width: 172px; height: 23px; }
.arrow { position: absolute; left: 684px; top: 60px; pointer-events: none; }

.taskbar { display: flex; flex: none; height: 26px; background: linear-gradient(90deg, #1f353e 0 480px, #454749 530px calc(100% - 110px), #1a2a46 calc(100% - 80px)); }
.start { display: grid; place-items: center; width: 31px; }
.search { display: flex; align-items: center; width: 188px; padding-left: 7px; background: #f3f3f3; }
.search input { width: 0; flex: 1; height: 100%; margin-left: 7px; font: 11px "Noto Sans CJK TC", sans-serif; }
.search input::placeholder { color: #333; opacity: 1; }
.apps { display: grid; grid-template-columns: repeat(14, 1fr); width: 452px; }
.apps button { display: grid; place-items: center; border-bottom: 2px solid transparent; padding-top: 1px; }
.apps .open { border-image: linear-gradient(90deg, transparent 3px, #78b6e8 3px 29px, transparent 29px) 2; border-bottom-color: #78b6e8; }
.apps .current { background: #6c7073; }
.apps .alert { background: #bb7136; border-bottom-color: #f58220; }
.tray { display: flex; flex: 1; align-items: center; justify-content: flex-end; gap: 5px; padding-right: 15px; color: #eee; }
.stock { margin-right: 9px; }
.ime { font-size: 11px; line-height: 14px; }
time { width: 42px; font-size: 8px; line-height: 12px; text-align: center; white-space: nowrap; }
.note { margin-left: 6px; }
</style>
